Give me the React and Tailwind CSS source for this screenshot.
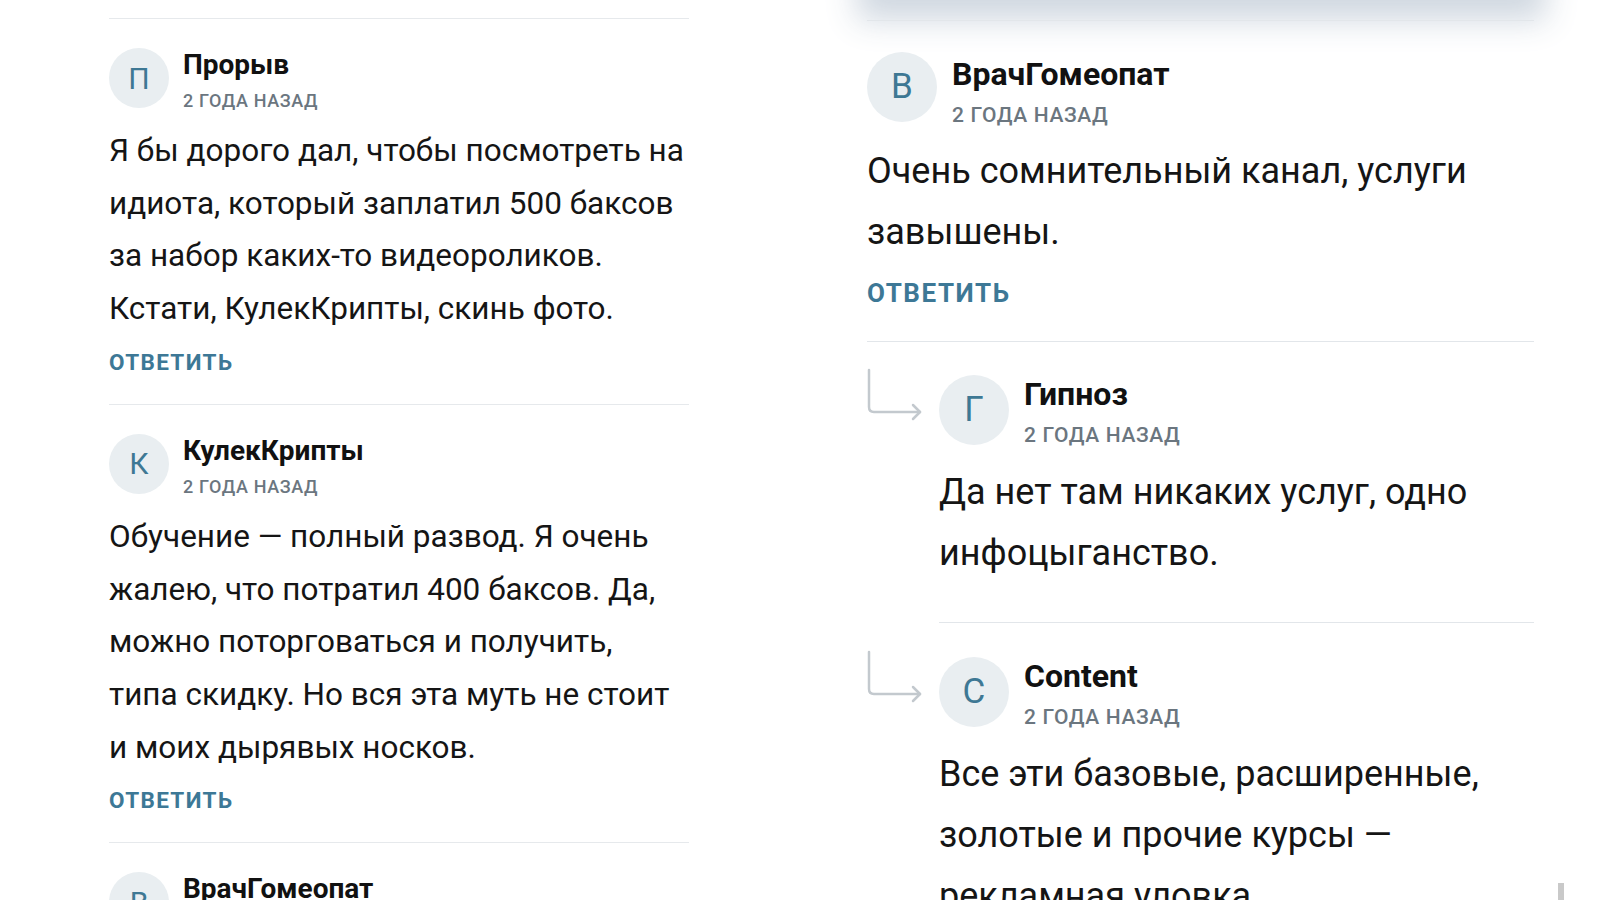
const leftComments = [
  {
    letter: 'П',
    name: 'Прорыв',
    lines: [
      'Я бы дорого дал, чтобы посмотреть на',
      'идиота, который заплатил 500 баксов',
      'за набор каких-то видеороликов.',
      'Кстати, КулекКрипты, скинь фото.',
    ],
  },
  {
    letter: 'К',
    name: 'КулекКрипты',
    lines: [
      'Обучение — полный развод. Я очень',
      'жалею, что потратил 400 баксов. Да,',
      'можно поторговаться и получить,',
      'типа скидку. Но вся эта муть не стоит',
      'и моих дырявых носков.',
    ],
  },
  {
    letter: 'В',
    name: 'ВрачГомеопат',
    lines: ['Очень сомнительный канал, услуги', 'завышены.'],
  },
]

const replies = [
  {
    letter: 'Г',
    name: 'Гипноз',
    lines: ['Да нет там никаких услуг, одно', 'инфоцыганство.'],
    pt: 'pt-[33px]',
  },
  {
    letter: 'C',
    name: 'Content',
    lines: ['Все эти базовые, расширенные,', 'золотые и прочие курсы —', 'рекламная уловка.'],
    pt: 'pt-[34px]',
  },
]

function Lines({ lines }) {
  return lines.map(l => <span key={l} className="block whitespace-nowrap">{l}</span>)
}

function SmallComment({ c }) {
  return (
    <div className="border-t-[1.5px] border-[#e6e9ec] pt-[29px] pb-[28px]">
      <div className="flex items-start">
        <div className="w-[60px] h-[60px] rounded-full bg-[#e9eef1] flex items-center justify-center text-[30px] text-[#3e7894] shrink-0">
          {c.letter}
        </div>
        <div className="ml-[14px] mt-[2px]">
          <div className="text-[28px] leading-[30px] font-bold text-[#111]">{c.name}</div>
          <div className="mt-[10px] text-[18px] leading-[22px] font-medium tracking-[0.035em] text-[#6b767f]">2 ГОДА НАЗАД</div>
        </div>
      </div>
      <p className="mt-[13px] text-[31.5px] leading-[52.7px] text-[#151515]"><Lines lines={c.lines} /></p>
      <div className="mt-[12px] text-[22.5px] leading-[28px] font-bold tracking-[0.06em] text-[#3d7896]">ОТВЕТИТЬ</div>
    </div>
  )
}

function Arrow() {
  return (
    <svg width="58" height="54" viewBox="0 0 58 54" className="-mt-[7px]" fill="none" stroke="#c3c9ce" strokeWidth="2.5" strokeLinecap="round" strokeLinejoin="round">
      <path d="M2 2 V39 Q2 44 7 44 H53" />
      <path d="M46 37 L53 44 L46 51" />
    </svg>
  )
}

function Header({ letter, name, nameGap = 'mt-[4px]' }) {
  return (
    <div className="flex items-start">
      <div className="w-[70px] h-[70px] rounded-full bg-[#e9eef1] flex items-center justify-center text-[35px] text-[#3e7894] shrink-0">
        {letter}
      </div>
      <div className={`ml-[15px] ${nameGap}`}>
        <div className="text-[32px] leading-[36px] font-bold text-[#111]">{name}</div>
        <div className="mt-[10px] text-[21px] leading-[26px] font-medium tracking-[0.03em] text-[#6b767f]">2 ГОДА НАЗАД</div>
      </div>
    </div>
  )
}

export default function App() {
  return (
    <div className="relative w-[1600px] h-[900px] overflow-hidden bg-white flex font-['Roboto',sans-serif]">
      <div className="ml-[109px] w-[580px] shrink-0 pt-[18px]">
        {leftComments.map(c => <SmallComment key={c.name} c={c} />)}
      </div>

      <div className="ml-[148px] w-[729px] shrink-0">
        <div className="h-[16px] -mt-[16px] mx-[40px] bg-[#d3dbe3] shadow-[0_0_32px_20px_rgba(204,213,222,0.95)]" />
        <div className="mt-[20px] pl-[30px] pr-[32px]">
          <div className="border-t-[1.5px] border-b-[1.5px] border-[#e2e6ea] pt-[31px] pb-[32px]">
            <Header letter="В" name="ВрачГомеопат" />
            <p className="mt-[13px] text-[36px] leading-[61px] text-[#151515]">
              <Lines lines={['Очень сомнительный канал, услуги', 'завышены.']} />
            </p>
            <div className="mt-[14px] text-[26px] leading-[32px] font-bold tracking-[0.06em] text-[#3d7896]">ОТВЕТИТЬ</div>
          </div>

          {replies.map((r, i) => (
            <div key={r.name} className="flex">
              <div className={`w-[72px] shrink-0 ${r.pt}`}>
                <Arrow />
              </div>
              <div className={`flex-1 ${r.pt} pb-[38px] ${i === 0 ? 'border-b-[1.5px] border-[#e2e6ea]' : ''}`}>
                <Header letter={r.letter} name={r.name} nameGap="mt-[1px]" />
                <p className="mt-[14px] text-[36px] leading-[61px] text-[#151515]"><Lines lines={r.lines} /></p>
              </div>
            </div>
          ))}
        </div>
      </div>

      <div className="absolute right-[36px] bottom-0 w-[6px] h-[17px] bg-[#c9c9c9]" />
    </div>
  )
}
